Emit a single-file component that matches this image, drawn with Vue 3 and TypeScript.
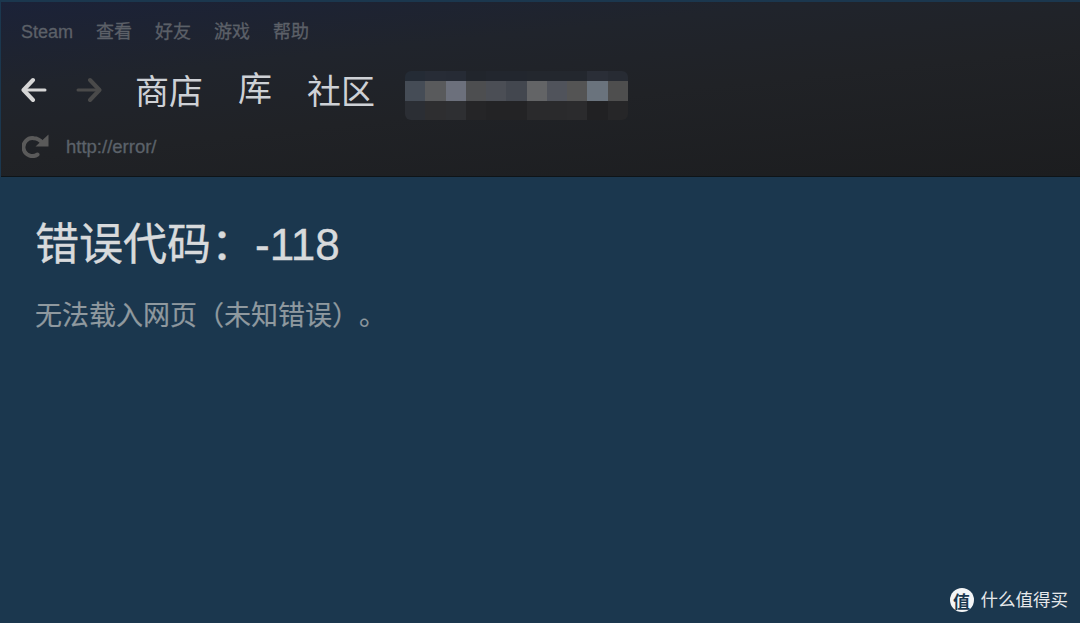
<script setup lang="ts">
const menus = ['Steam', '查看', '好友', '游戏', '帮助']
const tabs = ['商店', '库', '社区']

// 打码区域的色块，从左到右
const mosaicMid = ['#454c56', '#595a5c', '#6c707c', '#4d4e50', '#4b4e55', '#43474f', '#636466', '#50535b', '#545454', '#6a737d', '#4e4e4e']
const mosaicTop = ['#242b35', '#272c36', '#262b35', '#21252c', '#22262e', '#22262e', '#23272e', '#23272e', '#23272e', '#2a2e37', '#272b33']
const mosaicBottom = ['#2b2e34', '#2e2e30', '#2e2f32', '#252527', '#232325', '#232325', '#2a2a2c', '#2a2a2c', '#2b2b2d', '#212123', '#262628']
</script>

<template>
  <div class="page">
    <header class="top">
      <nav class="menu">
        <span v-for="m in menus" :key="m" class="menu-item">{{ m }}</span>
      </nav>

      <div class="nav-row">
        <svg class="arrow" width="26" height="28" viewBox="0 0 26 28" fill="none" stroke-linecap="round" stroke-linejoin="round">
          <path d="M24 14H4" stroke="#d6d6d6" stroke-width="3" />
          <path d="M12 4 2.500 14 12 24" stroke="#d6d6d6" stroke-width="4" />
        </svg>
        <svg class="arrow arrow-next" width="26" height="28" viewBox="0 0 26 28" fill="none" stroke-linecap="round" stroke-linejoin="round">
          <path d="M2 14H22" stroke="#4a4a4a" stroke-width="3" />
          <path d="M14 4l9.500 10L14 24" stroke="#4a4a4a" stroke-width="4" />
        </svg>
        <div class="tabs">
          <span v-for="t in tabs" :key="t" class="tab">{{ t }}</span>
        </div>
        <div class="mosaic">
          <div class="mosaic-row mosaic-top">
            <i v-for="(c, i) in mosaicTop" :key="i" :style="{ background: c }"></i>
          </div>
          <div class="mosaic-row">
            <i v-for="(c, i) in mosaicMid" :key="i" :style="{ background: c }"></i>
          </div>
          <div class="mosaic-row mosaic-bottom">
            <i v-for="(c, i) in mosaicBottom" :key="i" :style="{ background: c }"></i>
          </div>
        </div>
      </div>

      <div class="url-row">
        <svg class="reload" width="28" height="24" viewBox="0 0 28 24" fill="none">
          <path d="M15.500 20.500A9 9 0 1 1 12 4.200C16 4.200 18 6 20.500 9" stroke="#5a5a5a" stroke-width="4" stroke-linecap="round" />
          <path d="M26.500 .5V12.500H13.500Z" fill="#5a5a5a" />
        </svg>
        <span class="url">http://error/</span>
      </div>
    </header>

    <main class="body">
      <h1 class="title">错误代码：-118</h1>
      <p class="desc">无法载入网页（未知错误）。</p>
    </main>

    <div class="mark">
      <span class="mark-logo">值</span>
      <span class="mark-text">什么值得买</span>
    </div>
  </div>
</template>

<style>
html,
body {
  margin: 0;
  background: #1b374e;
}
</style>

<style scoped>
.page {
  position: relative;
  width: 1080px;
  height: 623px;
  overflow: hidden;
  background: #1b374e;
  font-family: 'Liberation Sans', 'Noto Sans CJK SC', sans-serif;
  text-spacing-trim: space-all;
}

.top {
  box-sizing: border-box;
  height: 177px;
  margin-left: 1px;
  border-top: 2px solid #1b374e;
  border-bottom: 1px solid #0e1418;
  background: linear-gradient(174deg, #1b2238 0%, #20242c 30%, #202226 55%, #1c1d1f 100%);
}

.menu {
  display: flex;
  gap: 23px;
  height: 60px;
  padding: 19px 0 0 20px;
  box-sizing: border-box;
}

.menu-item {
  font-size: 18px;
  line-height: 22px;
  color: #5c6068;
  -webkit-text-stroke: 0.3px #5c6068;
}

.nav-row {
  display: flex;
  align-items: center;
  height: 60px;
  padding-left: 20px;
}

.arrow {
  margin-top: -4px;
}

.arrow-next {
  margin-left: 29px;
}

.tabs {
  display: flex;
  gap: 35px;
  margin-left: 33px;
}

.tab {
  font-size: 34px;
  line-height: 44px;
  color: #ced1d6;
}

.tab:nth-child(2) {
  margin-top: -3px;
}

.mosaic {
  margin: 7px 0 0 30px;
  border-radius: 6px;
  overflow: hidden;
}

.mosaic-row {
  display: flex;
  height: 20px;
}

.mosaic-top {
  height: 10px;
}

.mosaic-bottom {
  height: 19px;
}

.mosaic-row i {
  display: block;
  width: 20.270px;
}

.url-row {
  display: flex;
  align-items: center;
  height: 50px;
  padding-left: 21px;
}

.reload {
  margin-top: -2px;
}

.url {
  margin-left: 16px;
  font-size: 18.500px;
  color: #5c626a;
  -webkit-text-stroke: 0.3px #5c626a;
}

.body {
  padding: 43px 0 0 35px;
}

.title {
  margin: 0;
  font-size: 44px;
  line-height: 50px;
  font-weight: 400;
  color: #d8dadc;
  -webkit-text-stroke: 0.4px #d8dadc;
}

.desc {
  margin: 30px 0 0;
  font-size: 27px;
  line-height: 32px;
  color: #8f999f;
  -webkit-text-stroke: 0.2px #8f999f;
}

.mark {
  position: absolute;
  right: 12px;
  top: 588px;
  display: flex;
  align-items: center;
  gap: 7px;
}

.mark-logo {
  display: flex;
  align-items: center;
  justify-content: center;
  width: 24px;
  height: 24px;
  border-radius: 50%;
  background: #f4f5f6;
  color: #1b374e;
  font-size: 17px;
  font-weight: 700;
}

.mark-text {
  font-size: 17.500px;
  line-height: 24px;
  color: #e6e8ea;
}
</style>
